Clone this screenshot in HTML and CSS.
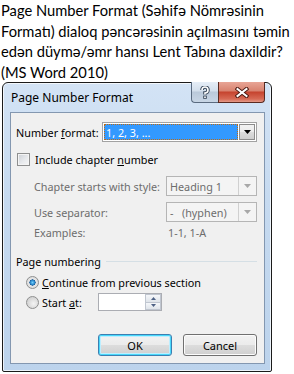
FILE: index.html
```html
<!DOCTYPE html>
<html lang="az">
<head>
    <meta charset="UTF-8">
    <meta name="viewport" content="width=device-width, initial-scale=1.0">
    <title>Page Number Format</title>
    <link rel="stylesheet" href="styles.css">
</head>
<body>
    <p class="question">Page Number Format (Səhifə Nömrəsinin<br>Formatı) dialoq pəncərəsinin açılmasını təmin<br>edən düymə/əmr hansı Lent Tabına daxildir?<br>(MS Word 2010)</p>

    <div class="window">
        <div class="titlebar">
            <span class="title">Page Number Format</span>
            <div class="caption-buttons">
                <span class="cap cap-help">
                    <svg width="10" height="13" viewBox="0 0 10 13">
                        <path d="M2 4 A3 3 0 1 1 5 7 V8.5" fill="none" stroke="#3b4a5c" stroke-width="3.6"/>
                        <path d="M2 4 A3 3 0 1 1 5 7 V8.5" fill="none" stroke="#fff" stroke-width="1.6"/>
                        <rect x="3.2" y="9.6" width="3.6" height="3.2" fill="#3b4a5c"/>
                        <rect x="4.1" y="10.5" width="1.8" height="1.4" fill="#fff"/>
                    </svg>
                </span>
                <span class="cap cap-close">
                    <svg width="14" height="11" viewBox="0 0 14 11">
                        <path d="M2.5 2 L11.5 9 M11.5 2 L2.5 9" stroke="#4a1810" stroke-width="4" stroke-linecap="square"/>
                        <path d="M2.5 2 L11.5 9 M11.5 2 L2.5 9" stroke="#fff" stroke-width="2" stroke-linecap="square"/>
                    </svg>
                </span>
            </div>
        </div>

        <div class="client">
            <div class="row row-format">
                <span class="label">Number <u>f</u>ormat:</span>
                <div class="combo combo-format">
                    <span class="combo-value"><span class="selected">1, 2, 3, ...</span></span>
                    <span class="combo-btn">
                        <svg width="7" height="4" viewBox="0 0 7 4"><path d="M0 0 H7 L3.5 4 Z" fill="#000"/></svg>
                    </span>
                </div>
            </div>

            <div class="row row-check">
                <span class="checkbox"></span>
                <span>Include chapter <u>n</u>umber</span>
            </div>

            <div class="row row-field row-style disabled">
                <span class="label">Chapter starts with style:</span>
                <div class="combo combo-off">
                    <span class="combo-value">Heading 1</span>
                    <span class="combo-btn">
                        <svg width="7" height="4" viewBox="0 0 7 4"><path d="M0 0 H7 L3.5 4 Z" fill="#a8a8a8"/></svg>
                    </span>
                </div>
            </div>

            <div class="row row-field row-sep disabled">
                <span class="label">Use separator:</span>
                <div class="combo combo-off">
                    <span class="combo-value">-&nbsp;&nbsp;&nbsp;(hyphen)</span>
                    <span class="combo-btn">
                        <svg width="7" height="4" viewBox="0 0 7 4"><path d="M0 0 H7 L3.5 4 Z" fill="#a8a8a8"/></svg>
                    </span>
                </div>
            </div>

            <div class="row row-field row-examples disabled">
                <span class="label">Examples:</span>
                <span class="examples">1-1, 1-A</span>
            </div>

            <div class="row row-group">
                <span>Page numbering</span>
                <span class="group-line"></span>
            </div>

            <div class="row row-radio row-continue">
                <span class="radio radio-on"></span>
                <span><u>C</u>ontinue from previous section</span>
            </div>

            <div class="row row-radio row-start">
                <span class="radio"></span>
                <span class="start-label">Start <u>a</u>t:</span>
                <div class="spin">
                    <span class="spin-field"></span>
                    <span class="spin-btns">
                        <span class="spin-btn">
                            <svg width="5" height="3" viewBox="0 0 5 3"><path d="M0 3 H5 L2.5 0 Z" fill="#4d6185"/></svg>
                        </span>
                        <span class="spin-btn">
                            <svg width="5" height="3" viewBox="0 0 5 3"><path d="M0 0 H5 L2.5 3 Z" fill="#4d6185"/></svg>
                        </span>
                    </span>
                </div>
            </div>

            <div class="row row-buttons">
                <button class="btn btn-default" type="button">OK</button>
                <button class="btn" type="button">Cancel</button>
            </div>
        </div>
    </div>
</body>
</html>
```

FILE: styles.css
```css
body {
    margin: 0;
    background: #fff;
    font-family: "Noto Sans", "Open Sans", sans-serif;
    color: #000;
    width: 294px;
    height: 374px;
    overflow: hidden;
}
.question {
    margin: 0;
    padding-left: 1px;
    font-family: Lato, "Open Sans", sans-serif;
    font-size: 14.7px;
    line-height: 20.5px;
    height: 82px;
    white-space: nowrap;
}
.window {
    margin-left: 2px;
    width: 270px;
    height: 290px;
    box-sizing: border-box;
    border: 1px solid #1b1b1b;
    border-radius: 6px 6px 2px 2px;
    background: linear-gradient(to bottom, #d3e3f5 0%, #c6daf0 40%, #bcd3ec 100%);
    box-shadow: inset 0 0 0 1px rgba(255,255,255,0.7);
    display: flex;
    flex-direction: column;
}
.titlebar {
    height: 29px;
    display: flex;
    align-items: flex-start;
    justify-content: space-between;
    flex-shrink: 0;
}
.title {
    margin: 7px 0 0 8px;
    font-size: 12px;
    line-height: 16px;
}
.caption-buttons {
    display: flex;
    margin: -1px 6px 0 0;
}
.cap {
    height: 21px;
    display: flex;
    align-items: center;
    justify-content: center;
    box-sizing: border-box;
    border: 1px solid #5a6b80;
    border-top: none;
}
.cap-help {
    width: 27px;
    border-right: none;
    border-radius: 0 0 0 4px;
    background: linear-gradient(to bottom, #e6eef7 0%, #d3dfec 45%, #bac9da 50%, #c8d6e6 100%);
}
.cap-close {
    width: 47px;
    border-color: #5a2a20;
    border-radius: 0 0 4px 0;
    background: linear-gradient(to bottom, #e8a596 0%, #d8826f 45%, #c5432e 50%, #d76a55 85%, #e49a88 100%);
}
.client {
    flex: 1;
    margin: 0 6px 7px 7px;
    border: 1px solid #8397b0;
    background: #f0f0f0;
    font-size: 10.8px;
    display: flex;
    flex-direction: column;
    padding: 0 7px 0 5px;
}
.row {
    display: flex;
    align-items: center;
    white-space: nowrap;
}
.row-format {
    margin-top: 9px;
    height: 20px;
}
.row-format .label {
    width: 86px;
}
.combo {
    height: 20px;
    box-sizing: border-box;
    display: flex;
    align-items: stretch;
}
.combo-format {
    width: 155px;
    border: 1px solid #a2a2a2;
    background: #fff;
    padding: 1px;
}
.combo-format .combo-value {
    flex: 1;
    background: #3399ff;
    outline: 1px dotted #c06a10;
    outline-offset: -1px;
    display: flex;
    align-items: center;
    padding-left: 2px;
}
.selected {
    color: #fff;
}
.combo-btn {
    width: 16px;
    display: flex;
    align-items: center;
    justify-content: center;
}
.combo-format .combo-btn {
    margin-left: 1px;
    border: 1px solid #8c8c8c;
    box-sizing: border-box;
    background: linear-gradient(to bottom, #f2f2f2 0%, #ebebeb 50%, #dddddd 50%, #cfcfcf 100%);
}
.row-check {
    margin-top: 8px;
    height: 18px;
    padding-left: 1px;
}
.checkbox {
    width: 13px;
    height: 13px;
    box-sizing: border-box;
    border: 1px solid #8e8f8f;
    background: linear-gradient(135deg, #cbcfd5 0%, #e7e9ec 55%, #f6f6f6 100%);
    box-shadow: inset 0 0 0 1px #f4f4f4;
    margin-right: 5px;
}
.disabled {
    color: #6d6d6d;
}
.row-field {
    padding-left: 18px;
}
.row-field .label {
    width: 132px;
}
.row-style {
    margin-top: 8px;
    height: 20px;
}
.row-sep {
    margin-top: 6px;
    height: 20px;
}
.row-examples {
    margin-top: 1px;
    height: 18px;
}
.examples {
    padding-left: 2px;
}
.combo-off {
    width: 91px;
    border: 1px solid #b5b5b5;
    background: #f4f4f4;
}
.combo-off .combo-value {
    flex: 1;
    display: flex;
    align-items: center;
    padding-left: 3px;
}
.combo-off .combo-btn {
    width: 17px;
    border-left: 1px solid #d0d0d0;
}
.row-group {
    margin-top: 11px;
    height: 18px;
}
.group-line {
    flex: 1;
    height: 1px;
    background: #d5dfe5;
    margin-left: 5px;
}
.row-radio {
    padding-left: 10px;
}
.row-continue {
    margin-top: 3px;
    height: 18px;
}
.row-start {
    margin-top: 1px;
    height: 20px;
}
.radio {
    width: 13px;
    height: 13px;
    box-sizing: border-box;
    border-radius: 50%;
    border: 1px solid #8e8f8f;
    background: radial-gradient(circle at 60% 60%, #f4f4f4 0%, #dcdcdc 50%, #c8c8c8 100%);
    margin-right: 3px;
}
.radio-on {
    background: radial-gradient(circle at 50% 50%, #6fd0ff 0%, #2a86c8 28%, #1c5c99 38%, #e8e8e8 42%, #d3d3d3 100%);
}
.start-label {
    width: 56px;
}
.spin {
    width: 64px;
    height: 18px;
    box-sizing: border-box;
    border: 1px solid #abadb3;
    background: #fff;
    display: flex;
}
.spin-field {
    flex: 1;
}
.spin-btns {
    width: 16px;
    display: flex;
    flex-direction: column;
}
.spin-btn {
    flex: 1;
    display: flex;
    align-items: center;
    justify-content: center;
    border: 1px solid #c0c6d0;
    background: linear-gradient(to bottom, #f5f7fa, #dfe4ea);
}
.spin-btn + .spin-btn {
    border-top: none;
}
.row-buttons {
    margin-top: 22px;
    justify-content: flex-end;
    gap: 11px;
}
.btn {
    width: 74px;
    height: 22px;
    box-sizing: border-box;
    border: 1px solid #707070;
    border-radius: 3px;
    background: linear-gradient(to bottom, #f2f2f2 0%, #ebebeb 50%, #dddddd 50%, #cfcfcf 100%);
    box-shadow: inset 0 0 0 1px #fcfcfc;
    font-family: inherit;
    font-size: 11px;
    color: #000;
    padding: 0;
}
.btn-default {
    border-color: #3c7fb1;
    box-shadow: inset 0 0 0 1px #48d8fb, inset 0 0 0 2px #bdeeff;
}
```
